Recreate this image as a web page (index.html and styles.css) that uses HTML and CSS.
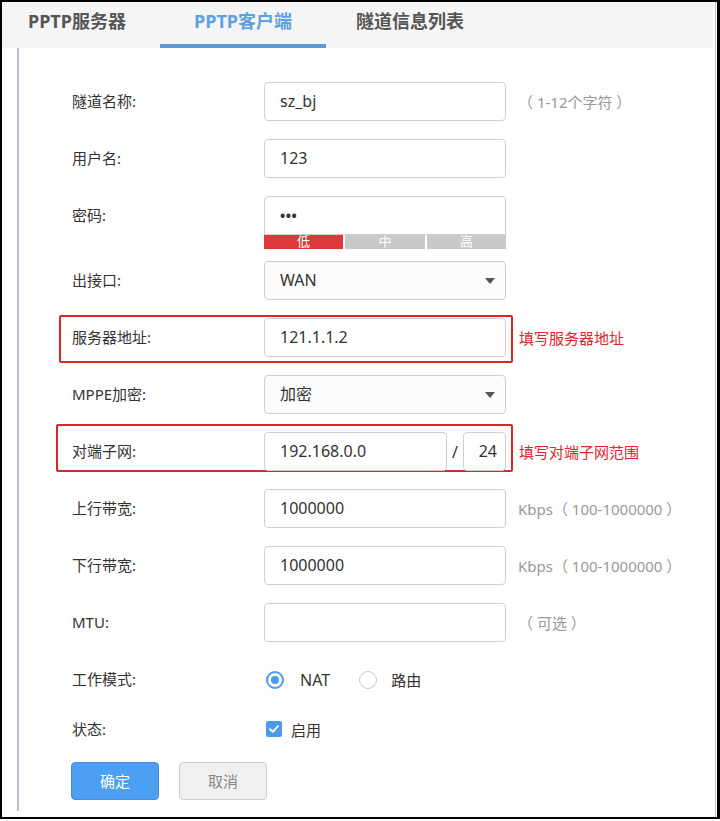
FILE: index.html
```html
<!DOCTYPE html>
<html lang="zh-CN">
<head>
<meta charset="utf-8">
<title>PPTP客户端</title>
<link rel="stylesheet" href="styles.css">
</head>
<body>
<div class="frame">
  <div class="inner">
    <div class="tabs">
      <div class="tab tab-first">PPTP服务器</div>
      <div class="tab tab-active">PPTP客户端</div>
      <div class="tab tab-last">隧道信息列表</div>
    </div>
    <div class="panel">
      <div class="form">
        <div class="row">
          <div class="lbl">隧道名称:</div>
          <div class="input">sz_bj</div>
          <div class="hint">（ 1-12个字符 ）</div>
        </div>
        <div class="row">
          <div class="lbl">用户名:</div>
          <div class="input">123</div>
        </div>
        <div class="row row-pwd">
          <div class="lbl">密码:</div>
          <div class="pwd-col">
            <div class="input input-pwd">•••</div>
            <div class="strength">
              <div class="seg seg-on">低</div>
              <div class="seg">中</div>
              <div class="seg">高</div>
            </div>
          </div>
        </div>
        <div class="row">
          <div class="lbl">出接口:</div>
          <div class="input select">WAN<span class="arrow"></span></div>
        </div>
        <div class="row row-mark">
          <div class="mark mark-server"></div>
          <div class="lbl">服务器地址:</div>
          <div class="input">121.1.1.2</div>
          <div class="hint hint-red">填写服务器地址</div>
        </div>
        <div class="row">
          <div class="lbl">MPPE加密:</div>
          <div class="input select">加密<span class="arrow"></span></div>
        </div>
        <div class="row row-mark">
          <div class="mark mark-subnet"></div>
          <div class="lbl">对端子网:</div>
          <div class="input input-ip">192.168.0.0</div>
          <div class="slash">/</div>
          <div class="input input-mask">24</div>
          <div class="hint hint-red">填写对端子网范围</div>
        </div>
        <div class="row">
          <div class="lbl">上行带宽:</div>
          <div class="input">1000000</div>
          <div class="hint">Kbps（ 100-1000000 ）</div>
        </div>
        <div class="row">
          <div class="lbl">下行带宽:</div>
          <div class="input">1000000</div>
          <div class="hint">Kbps（ 100-1000000 ）</div>
        </div>
        <div class="row">
          <div class="lbl">MTU:</div>
          <div class="input"></div>
          <div class="hint">（ 可选 ）</div>
        </div>
        <div class="row">
          <div class="lbl">工作模式:</div>
          <div class="opt"><span class="radio radio-on"></span><span class="opt-text">NAT</span></div>
          <div class="opt opt-2"><span class="radio"></span><span class="opt-text opt-text-2">路由</span></div>
        </div>
        <div class="row row-check">
          <div class="lbl">状态:</div>
          <div class="opt"><span class="check"><svg width="10" height="8" viewBox="0 0 10 8"><path d="M1 4.2 L3.8 6.8 L9 1.2" fill="none" stroke="#fff" stroke-width="1.8" stroke-linecap="round" stroke-linejoin="round"/></svg></span><span class="check-text">启用</span></div>
        </div>
        <div class="buttons">
          <div class="btn btn-ok">确定</div>
          <div class="btn btn-cancel">取消</div>
        </div>
      </div>
    </div>
  </div>
</div>
</body>
</html>
```

FILE: styles.css
```css
* { box-sizing: border-box; }
html, body {
  margin: 0;
  padding: 0;
  background: #fff;
}
body {
  width: 720px;
  height: 821px;
  font-family: "Noto Sans", "Noto Sans CJK SC", sans-serif;
  color: #333;
}
.frame {
  width: 720px;
  height: 819px;
  border: 2px solid #000;
  border-right-width: 3px;
  background: #fff;
}
.inner {
  height: 100%;
  margin-right: 1px;
  border-right: 1px solid #c4c4c4;
  display: flex;
  flex-direction: column;
}
.tabs {
  height: 46px;
  background: #f5f5f5;
  display: flex;
  margin-right: 2px;
  flex: none;
}
.tab {
  font-family: "Noto Sans", "Noto Sans CJK SC", sans-serif;
  font-weight: 700;
  font-size: 18px;
  line-height: 22px;
  color: #555;
  padding-top: 8px;
  height: 46px;
}
.tab-first {
  width: 158px;
  padding-left: 26px;
}
.tab-active {
  width: 166px;
  text-align: center;
  color: #5fa0e0;
  border-bottom: 4px solid #5b9bd9;
}
.tab-last {
  padding-left: 30px;
}
.panel {
  margin-left: 15px;
  border-left: 2px solid #b6c2cf;
  height: 763px;
  padding-left: 53px;
  padding-top: 34px;
  flex: none;
}
.form {
  display: flex;
  flex-direction: column;
  gap: 18px;
}
.row {
  display: flex;
  align-items: center;
  height: 39px;
  position: relative;
}
.row-pwd {
  height: 53px;
  align-items: flex-start;
  margin-bottom: -6px;
}
.lbl {
  width: 192px;
  font-size: 15px;
  line-height: 39px;
  color: #333;
  flex: none;
}
.input {
  width: 242px;
  height: 39px;
  border: 1px solid #cfcfcf;
  border-radius: 4px;
  background: #fff;
  padding-left: 15px;
  font-size: 16px;
  line-height: 37px;
  color: #333;
  flex: none;
  position: relative;
}
.input-pwd {
  font-size: 14px;
  font-weight: 700;
  letter-spacing: 0.5px;
  border-bottom-left-radius: 0;
  border-bottom-right-radius: 0;
}
.pwd-col {
  display: flex;
  flex-direction: column;
}
.strength {
  display: grid;
  grid-template-columns: 79px 80px 79px;
  gap: 2px;
  width: 242px;
  height: 15px;
  margin-top: -1px;
}
.seg {
  background: #c9c9c9;
  color: #fff;
  font-size: 13px;
  line-height: 15px;
  text-align: center;
}
.seg-on { background: #e0393b; }
.select { background: #fbfbfb; }
.arrow {
  position: absolute;
  right: 10px;
  top: 16px;
  width: 0;
  height: 0;
  border-left: 5px solid transparent;
  border-right: 5px solid transparent;
  border-top: 6px solid #555;
}
.hint {
  margin-left: 12px;
  font-size: 15px;
  color: #999;
  white-space: nowrap;
}
.hint-red {
  margin-left: 13px;
  color: #e0262a;
}
.mark {
  position: absolute;
  border: 2px solid #d8262a;
  border-radius: 2px;
  pointer-events: none;
}
.mark-server {
  left: -13px;
  top: -3px;
  width: 454px;
  height: 48px;
}
.mark-subnet {
  left: -16px;
  top: -8px;
  width: 457px;
  height: 48px;
}
.input-ip { width: 183px; }
.slash {
  width: 16px;
  text-align: center;
  font-size: 16px;
  color: #333;
  flex: none;
}
.input-mask {
  width: 43px;
  padding-left: 0;
  padding-right: 8px;
  text-align: right;
}
.opt {
  display: flex;
  align-items: center;
}
.radio {
  width: 18px;
  height: 18px;
  border-radius: 50%;
  border: 1.5px solid #c6c6c6;
  background: #fff;
  flex: none;
  margin-left: 2px;
  position: relative;
}
.radio-on {
  border: 2px solid #4a9bf0;
}
.radio-on::after {
  content: "";
  position: absolute;
  left: 3px;
  top: 3px;
  width: 8px;
  height: 8px;
  border-radius: 50%;
  background: #4a9bf0;
}
.opt-text {
  margin-left: 16px;
  font-size: 16px;
  color: #333;
}
.opt-2 { margin-left: 27px; }
.opt-text-2 { margin-left: 14px; font-size: 15px; }
.row-check {
  height: 30px;
  margin-top: -3px;
}
.check {
  width: 16px;
  height: 16px;
  border-radius: 2px;
  background: #4a9bf0;
  margin-left: 2px;
  display: flex;
  align-items: center;
  justify-content: center;
}
.check-text {
  margin-left: 9px;
  font-size: 15px;
  color: #333;
}
.buttons {
  display: flex;
  gap: 20px;
  margin-left: -1px;
}
.btn {
  width: 88px;
  height: 38px;
  border-radius: 4px;
  font-size: 15px;
  line-height: 36px;
  text-align: center;
}
.btn-ok {
  background: #4c9ff2;
  border: 1px solid #3f8fe0;
  color: #fff;
}
.btn-cancel {
  background: #f0f0f0;
  border: 1px solid #cdcdcd;
  color: #888;
}
```
